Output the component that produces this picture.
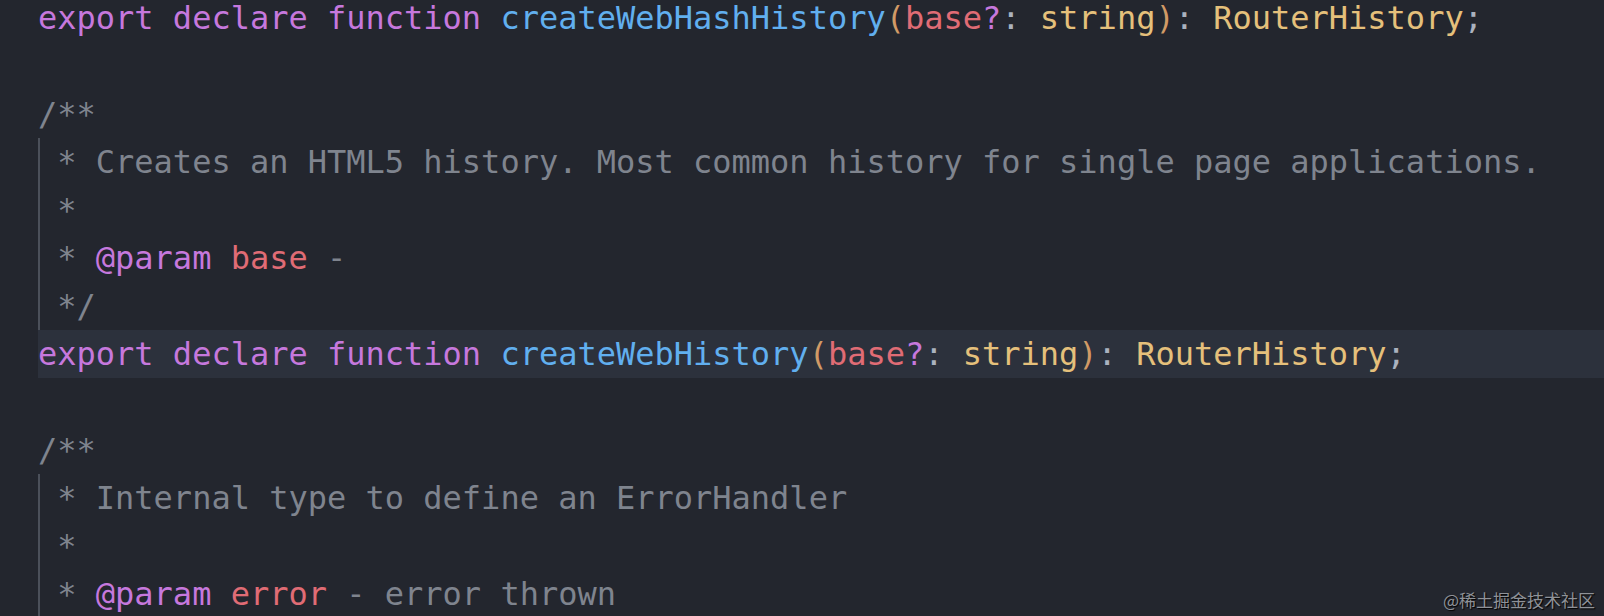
import React from 'react';

type Tok = [string, string];

const K = 'text-[#c678dd]';
const F = 'text-[#61afef]';
const P = 'text-[#e06c75]';
const O = 'text-[#d19a66]';
const T = 'text-[#e5c07b]';
const G = 'text-[#abb2bf]';
const C = 'text-[#7f848e]';

const decl = (name: string): Tok[] => [
  ['export declare function ', K],
  [name, F],
  ['(', O],
  ['base', P],
  ['?', K],
  [': ', G],
  ['string', T],
  [')', O],
  [': ', G],
  ['RouterHistory', T],
  [';', G],
];

const Line: React.FC<{ toks: Tok[]; guide?: boolean; active?: boolean }> = ({ toks, guide, active }) => (
  <div
    className={`h-[48px] whitespace-pre ${active ? 'bg-[#2c313c]' : ''} ${
      guide ? 'shadow-[inset_2px_0_0_#4b505a]' : ''
    }`}
  >
    {toks.length === 0 ? ' ' : toks.map(([t, c], i) => (
      <span key={i} className={c}>
        {t}
      </span>
    ))}
  </div>
);

const App: React.FC = () => {
  return (
    <div className="relative w-full h-[616px] overflow-hidden bg-[#23262e]">
      <div className="-mt-[6px] pl-[38px] font-['DejaVu_Sans_Mono',monospace] text-[32px] leading-[48px]">
        <Line toks={decl('createWebHashHistory')} />
        <Line toks={[]} />
        <Line toks={[['/**', C]]} />
        <Line guide toks={[[' * Creates an HTML5 history. Most common history for single page applications.', C]]} />
        <Line guide toks={[[' *', C]]} />
        <Line guide toks={[[' * ', C], ['@param', K], [' ', C], ['base', P], [' -', C]]} />
        <Line guide toks={[[' */', C]]} />
        <Line active toks={decl('createWebHistory')} />
        <Line toks={[]} />
        <Line toks={[['/**', C]]} />
        <Line guide toks={[[' * Internal type to define an ErrorHandler', C]]} />
        <Line guide toks={[[' *', C]]} />
        <Line guide toks={[[' * ', C], ['@param', K], [' ', C], ['error', P], [' - error thrown', C]]} />
        <Line guide toks={[]} />
      </div>
      <div className="absolute right-[9px] bottom-[8px] font-['Noto_Sans_CJK_SC',sans-serif] text-[17px] leading-none text-[#8f9298] [text-shadow:1px_1px_1px_#000]">
        @稀土掘金技术社区
      </div>
    </div>
  );
};

export default App;
